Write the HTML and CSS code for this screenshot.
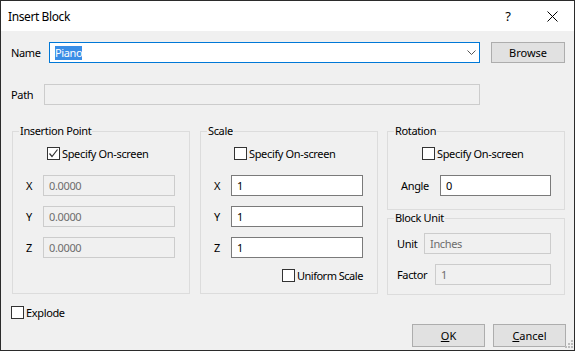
FILE: index.html
```html
<!DOCTYPE html>
<html lang="en">
<head>
    <meta charset="UTF-8">
    <meta name="viewport" content="width=device-width, initial-scale=1.0">
    <title>Insert Block</title>
    <link rel="stylesheet" href="styles.css">
</head>
<body>
    <div class="window">
        <div class="titlebar">
            <span class="title">Insert Block</span>
            <span class="help">?</span>
            <span class="close">
                <svg width="11" height="11" viewBox="0 0 11 11"><path d="M0.5 0.5 L10.5 10.5 M10.5 0.5 L0.5 10.5" stroke="#000" stroke-width="1" fill="none"/></svg>
            </span>
        </div>
        <div class="dialog">
            <div class="row name-row">
                <label class="lbl name-lbl">Name</label>
                <div class="combo">
                    <span class="sel">Piano</span>
                    <svg class="chevron" width="9" height="5" viewBox="0 0 9 5"><path d="M0.5 0.5 L4.5 4.5 L8.5 0.5" stroke="#555" stroke-width="1" fill="none"/></svg>
                </div>
                <button class="btn browse">Browse</button>
            </div>
            <div class="row path-row">
                <label class="lbl path-lbl">Path</label>
                <div class="field disabled path-field"></div>
            </div>

            <div class="groups">
                <div class="group insertion">
                    <span class="group-title">Insertion Point</span>
                    <div class="check-row">
                        <span class="check">
                            <svg width="11" height="11" viewBox="0 0 11 11"><path d="M1.5 5.5 L4 8.5 L9.5 1.5" stroke="#333" stroke-width="1.2" fill="none"/></svg>
                        </span>Specify On-screen
                    </div>
                    <div class="coord first"><span class="axis">X</span><div class="field disabled">0.0000</div></div>
                    <div class="coord"><span class="axis">Y</span><div class="field disabled">0.0000</div></div>
                    <div class="coord"><span class="axis">Z</span><div class="field disabled">0.0000</div></div>
                </div>

                <div class="group scale">
                    <span class="group-title">Scale</span>
                    <div class="check-row"><span class="check"></span>Specify On-screen</div>
                    <div class="coord first"><span class="axis">X</span><div class="field">1</div></div>
                    <div class="coord"><span class="axis">Y</span><div class="field">1</div></div>
                    <div class="coord"><span class="axis">Z</span><div class="field">1</div></div>
                    <div class="check-row uniform"><span class="check"></span>Uniform Scale</div>
                </div>

                <div class="column">
                    <div class="group rotation">
                        <span class="group-title">Rotation</span>
                        <div class="check-row"><span class="check"></span>Specify On-screen</div>
                        <div class="coord first"><span class="axis angle-lbl">Angle</span><div class="field angle-field">0</div></div>
                    </div>
                    <div class="group unit">
                        <span class="group-title">Block Unit</span>
                        <div class="coord unit-row"><span class="axis unit-lbl">Unit</span><div class="field disabled unit-field">Inches</div></div>
                        <div class="coord"><span class="axis factor-lbl">Factor</span><div class="field disabled factor-field">1</div></div>
                    </div>
                </div>
            </div>

            <div class="check-row explode"><span class="check"></span>Explode</div>

            <div class="buttons">
                <button class="btn"><u>O</u>K</button>
                <button class="btn"><u>C</u>ancel</button>
            </div>

            <svg class="grip" width="8" height="8" viewBox="0 0 8 8">
                <rect x="6" y="0" width="2" height="2" fill="#bcbcbc"/>
                <rect x="3" y="3" width="2" height="2" fill="#bcbcbc"/>
                <rect x="6" y="3" width="2" height="2" fill="#bcbcbc"/>
                <rect x="0" y="6" width="2" height="2" fill="#bcbcbc"/>
                <rect x="3" y="6" width="2" height="2" fill="#bcbcbc"/>
                <rect x="6" y="6" width="2" height="2" fill="#bcbcbc"/>
            </svg>
        </div>
    </div>
</body>
</html>
```
FILE: styles.css
```css
body {
    margin: 0;
    background-color: #fff;
}
.window {
    width: 575px;
    height: 351px;
    box-sizing: border-box;
    border: 1px solid #2b2b2b;
    display: flex;
    flex-direction: column;
    font-family: "Noto Sans", sans-serif;
    font-size: 11px;
    letter-spacing: -0.35px;
    color: #000;
}
.titlebar {
    flex: none;
    height: 30px;
    background-color: #fff;
    display: flex;
    align-items: center;
    padding-left: 7px;
}
.title {
    flex: 1;
    font-size: 12px;
    letter-spacing: -0.4px;
}
.help {
    width: 16px;
    text-align: center;
    font-size: 13px;
}
.close {
    width: 17px;
    height: 11px;
    margin: 0 13px 0 28px;
    display: flex;
    justify-content: center;
}
.dialog {
    flex: 1;
    position: relative;
    background-color: #f0f0f0;
    padding: 11px 9px 0 10px;
}
.row {
    display: flex;
    align-items: center;
}
.name-row {
    height: 21px;
}
.name-lbl {
    width: 38px;
}
.combo {
    box-sizing: border-box;
    width: 431px;
    height: 21px;
    border: 1px solid #0078d7;
    background-color: #fff;
    display: flex;
    align-items: center;
    padding: 0 3px 0 5px;
}
.sel {
    background-color: #3a8ee6;
    color: #fff;
    line-height: 14px;
}
.chevron {
    margin-left: auto;
}
.btn {
    box-sizing: border-box;
    height: 21px;
    width: 73px;
    border: 1px solid #adadad;
    background-color: #e1e1e1;
    font: inherit;
    color: #000;
    padding: 0;
}
.browse {
    width: 74px;
    margin-left: 11px;
}
.path-row {
    height: 21px;
    margin-top: 21px;
}
.path-lbl {
    width: 33px;
}
.field {
    box-sizing: border-box;
    height: 21px;
    width: 132px;
    border: 1px solid #7a7a7a;
    background-color: #fff;
    display: flex;
    align-items: center;
    padding-left: 5px;
}
.field.disabled {
    border-color: #cccccc;
    background-color: #f0f0f0;
    color: #6d6d6d;
}
.path-field {
    width: 436px;
}
.groups {
    display: flex;
    margin: 26px 0 0 1px;
}
.group {
    box-sizing: border-box;
    position: relative;
    width: 178px;
    border: 1px solid #dcdcdc;
}
.group-title {
    position: absolute;
    top: -9px;
    left: 6px;
    padding: 0 1px;
    line-height: 16px;
    background-color: #f0f0f0;
}
.insertion,
.scale {
    height: 163px;
}
.scale {
    margin-left: 10px;
}
.column {
    margin-left: 9px;
}
.rotation {
    height: 79px;
}
.unit {
    height: 77px;
    margin-top: 8px;
}
.check-row {
    display: flex;
    align-items: center;
    height: 13px;
    margin-top: 15px;
    padding-left: 34px;
}
.scale .check-row {
    padding-left: 33px;
}
.check {
    box-sizing: border-box;
    width: 13px;
    height: 13px;
    border: 1px solid #333;
    background-color: #fff;
    margin-right: 2px;
    display: flex;
}
.coord {
    display: flex;
    align-items: center;
    height: 21px;
    margin-top: 10px;
    padding-left: 13px;
}
.coord.first {
    margin-top: 15px;
}
.axis {
    width: 17px;
}
.scale .check-row.uniform {
    margin-top: 11px;
    padding-left: 81px;
    letter-spacing: -0.5px;
}
.angle-lbl {
    width: 39px;
}
.angle-field {
    width: 111px;
}
.unit .coord {
    padding-left: 9px;
}
.unit-row {
    margin-top: 14px;
}
.unit-lbl {
    width: 27px;
}
.unit-field {
    width: 127px;
}
.factor-lbl {
    width: 38px;
}
.factor-field {
    width: 116px;
}
.check-row.explode {
    margin-top: 11px;
    padding-left: 0;
}
.buttons {
    display: flex;
    justify-content: flex-end;
    gap: 8px;
    margin-top: 5px;
    margin-right: -1px;
}
.buttons .btn {
    height: 23px;
}
.grip {
    position: absolute;
    right: 1px;
    bottom: 2px;
}
```
